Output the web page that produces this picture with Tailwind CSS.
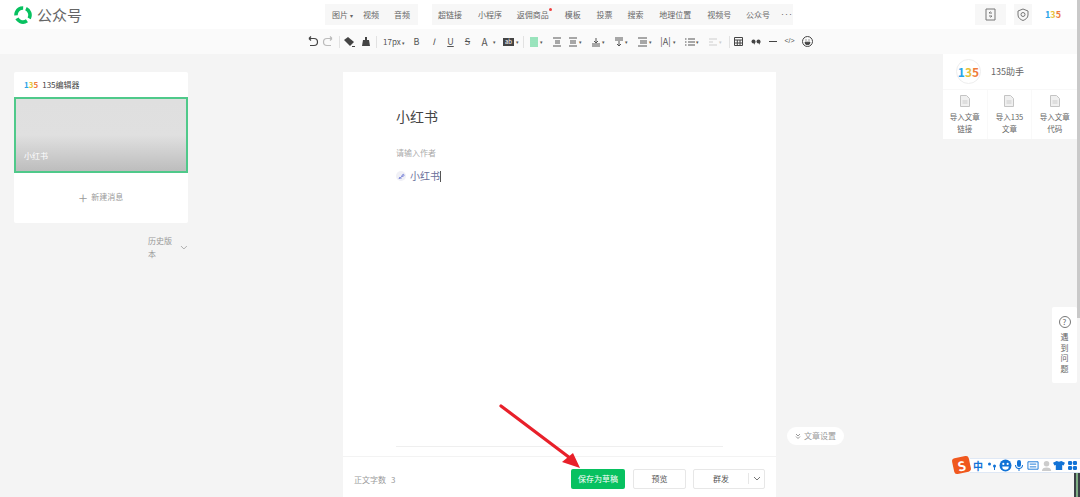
<!DOCTYPE html>
<html lang="zh-CN">
<head>
    <meta charset="UTF-8">
    <title>公众号 - 编辑</title>
    <script src="https://cdn.jsdelivr.net/npm/@tailwindcss/browser@4"></script>
</head>
<body class="relative flex flex-col h-[497px] w-[1080px] overflow-hidden bg-[#f4f4f4] text-[#666] font-['Noto_Sans_CJK_SC','Noto_Sans',sans-serif]">

    <!-- top nav -->
    <header class="flex items-center h-[29px] bg-white text-[8px] shrink-0">
        <div class="flex items-center w-[325px] pl-[13px]">
            <svg class="w-5 h-5" viewBox="0 0 20 20" fill="none" stroke="#07c160" stroke-width="3.600">
                <circle cx="10" cy="10" r="7" stroke-dasharray="11.500 3.160" transform="rotate(-65 10 10)"/>
            </svg>
            <span class="ml-[4px] text-[15px] leading-none text-[#666]">公众号</span>
        </div>
        <div class="flex items-center h-[21px] w-[93px] pl-[7px] bg-[#f7f7f7]">
            <span class="w-[31px]">图片 <span class="text-[6px]">▾</span></span>
            <span class="w-[31px]">视频</span>
            <span>音频</span>
        </div>
        <div class="flex items-center h-[21px] w-[361px] ml-[14px] pl-[6px] bg-[#f7f7f7]">
            <span class="w-[40px]">超链接</span>
            <span class="w-[39px]">小程序</span>
            <span class="relative w-[48px]">返佣商品<span class="absolute left-[32px] -top-[1px] w-[3px] h-[3px] rounded-full bg-[#f04040]"></span></span>
            <span class="w-[32px]">模板</span>
            <span class="w-[31px]">投票</span>
            <span class="w-[32px]">搜索</span>
            <span class="w-[48px]">地理位置</span>
            <span class="w-[39px]">视频号</span>
            <span class="w-[35px]">公众号</span>
            <span class="font-['Liberation_Sans',sans-serif] text-[9px] tracking-[1px]">···</span>
        </div>
        <div class="flex items-center ml-[182px] h-[21px] w-[31px] justify-center bg-[#f7f7f7]">
            <svg class="w-[11px] h-[13px]" viewBox="0 0 11 13" fill="none" stroke="#777" stroke-width="1"><path d="M1 1h9v11H1z"/><path d="M7 5H4l1.500-1.500M4 8h3L5.500 9.500"/></svg>
        </div>
        <div class="flex items-center ml-[8px] h-[21px] w-[18px] justify-center bg-[#f7f7f7]">
            <svg class="w-[12px] h-[13px]" viewBox="0 0 12 13" fill="none" stroke="#777" stroke-width="1"><path d="M6 1l5 2v4c0 3-2.500 4.500-5 5.500C3.500 11.500 1 10 1 7V3z"/><circle cx="6" cy="6.500" r="2"/></svg>
        </div>
        <div class="ml-[13px] text-[9px] font-bold leading-none"><span class="text-[#2aa4e8]">1</span><span class="text-[#e8c23a]">3</span><span class="text-[#ef7b3a]">5</span></div>
    </header>

    <!-- format toolbar -->
    <div class="flex items-center h-[25px] pl-[304px] bg-[#fafafa] text-[#555] text-[8px] shrink-0 whitespace-nowrap">
        <svg class="w-4 h-4" viewBox="0 0 16 16" fill="none" stroke="#444" stroke-width="1.200"><path d="M5 4.500h5a3.500 3.500 0 0 1 0 7H6M5 4.500l2-2M5 4.500l2 2"/></svg>
        <svg class="w-4 h-4 ml-[1px]" viewBox="0 0 16 16" fill="none" stroke="#bbb" stroke-width="1.200"><path d="M11 4.500H6a3.500 3.500 0 0 0 0 7h4M11 4.500l-2-2M11 4.500l-2 2"/></svg>
        <span class="w-px h-[12px] ml-[2px] bg-[#e2e2e2]"></span>
        <svg class="w-4 h-4 ml-[1px]" viewBox="0 0 16 16" fill="#444"><path d="M3 6l4-3 6 5-4 4z"/><path d="M11 12h3v1h-3z"/></svg>
        <svg class="w-4 h-4 ml-[1px]" viewBox="0 0 16 16" fill="#444"><path d="M7 3h2v3h2l1 6H4l1-6h2z"/></svg>
        <span class="w-px h-[12px] ml-[2px] bg-[#e2e2e2]"></span>
        <span class="ml-[6px] w-[21px] leading-none">17px <span class="text-[5px]">▾</span></span>
        <span class="ml-[4px] w-[17px] text-center text-[9px]">B</span>
        <span class="w-[17px] text-center text-[9px] italic">I</span>
        <span class="w-[17px] text-center text-[9px] underline">U</span>
        <span class="w-[17px] text-center text-[9px] line-through">S</span>
        <span class="w-[17px] text-center text-[10px]">A</span>
        <span class="text-[5px] w-[6px]">▾</span>
        <span class="ml-[4px] w-[11px] h-[8px] bg-[#444] text-white text-[6px] leading-[8px] text-center">ab</span>
        <span class="ml-[2px] text-[5px] w-[5px]">▾</span>
        <span class="w-px h-[12px] ml-[2px] bg-[#e2e2e2]"></span>
        <svg class="ml-[5px] w-[10px] h-[10px]" viewBox="0 0 10 10" stroke="#07c160" stroke-width=".8"><path d="M1 1h8M1 3h8M1 5h8M1 7h8M1 9h8"/></svg>
        <span class="ml-[1px] text-[5px] w-[6px]">▾</span>
        <svg class="ml-[5.500px] w-[10px] h-[10px]" viewBox="0 0 10 10" stroke="#555"><path d="M1 1h8M3 4h5M3 6h5M1 9h8"/></svg>
        <svg class="ml-[6px] w-[10px] h-[10px]" viewBox="0 0 10 10" stroke="#555"><path d="M1 1h8M2 4h6M2 6h6M1 9h8"/></svg>
        <span class="ml-[1px] text-[5px] w-[8px]">▾</span>
        <svg class="ml-[4px] w-[10px] h-[10px]" viewBox="0 0 10 10" stroke="#555" fill="none"><path d="M5 1v5M3 4l2 2 2-2M1 7h8M1 9h8"/></svg>
        <span class="ml-[1px] text-[5px] w-[8px]">▾</span>
        <svg class="ml-[4px] w-[10px] h-[10px]" viewBox="0 0 10 10" stroke="#555" fill="none"><path d="M1 1h8M1 3h8M5 4v5M3 7l2 2 2-2"/></svg>
        <span class="ml-[1px] text-[5px] w-[8px]">▾</span>
        <svg class="ml-[4px] w-[11px] h-[10px]" viewBox="0 0 11 10" stroke="#555" fill="none"><path d="M1 1h9M1 9h9M3 4h7M3 6h7"/></svg>
        <span class="ml-[1px] text-[5px] w-[8px]">▾</span>
        <span class="ml-[3.500px] w-[11px] text-[9px] leading-none text-center">|A|</span>
        <span class="ml-[2px] text-[5px] w-[8px]">▾</span>
        <svg class="ml-[3.500px] w-[10px] h-[10px]" viewBox="0 0 10 10" stroke="#555"><path d="M3 2h7M3 5h7M3 8h7M0 2h1.500M0 5h1.500M0 8h1.500"/></svg>
        <span class="ml-[1px] text-[5px] w-[8px]">▾</span>
        <svg class="ml-[4px] w-[10px] h-[10px]" viewBox="0 0 10 10" stroke="#ddd"><path d="M1 2h8M1 5h4M1 8h8" stroke-width="1.500"/></svg>
        <span class="ml-[1px] text-[5px] w-[5px] text-[#ccc]">▾</span>
        <span class="w-px h-[12px] ml-[5px] bg-[#e2e2e2]"></span>
        <svg class="ml-[4px] w-[9px] h-[9px]" viewBox="0 0 9 9" fill="none" stroke="#444"><path d="M.5.5h8v8h-8zM.5 3h8M.5 6h8M3.300 3v5.500M6 3v5.500"/></svg>
        <svg class="ml-[8px] w-[10px] h-[6px]" viewBox="0 0 10 6" fill="#444"><circle cx="2.500" cy="2.500" r="2"/><circle cx="7.500" cy="2.500" r="2"/><path d="M3 3h1.500L3 6zM8 3h1.500L8 6z"/></svg>
        <span class="ml-[8px] w-[8px] h-px bg-[#444]"></span>
        <span class="ml-[8px] w-[10px] text-[7px] text-center font-['Liberation_Sans',sans-serif]">&lt;/&gt;</span>
        <svg class="ml-[7px] w-[11px] h-[11px]" viewBox="0 0 11 11" fill="none" stroke="#444"><circle cx="5.500" cy="5.500" r="5"/><path d="M3 6.200h5a2.500 2.500 0 0 1-5 0z" fill="#444"/><path d="M3.500 4h1M6.500 4h1"/></svg>
    </div>

    <!-- main -->
    <main class="flex flex-1 min-h-0">
        <aside class="w-[343px] pl-[14px] pt-[18px] shrink-0">
            <div class="w-[174px] h-[151px] bg-white rounded-[2px]">
                <div class="flex items-center h-[25px] pl-[10px] text-[8px] text-[#444]">
                    <span class="text-[8px] font-bold leading-none"><span class="text-[#2aa4e8]">1</span><span class="text-[#e8c23a]">3</span><span class="text-[#ef7b3a]">5</span></span>
                    <span class="ml-[4px]">135编辑器</span>
                </div>
                <div class="flex items-end h-[76px] pl-[8px] pb-[9px] border-2 border-[#4fc98a] bg-gradient-to-b from-[#dfdfdf] via-[#e0e0e0] to-[#bdbdbd] text-[8px] text-white">小红书</div>
                <div class="flex items-center justify-center h-[48px] text-[8px] text-[#999]">
                    <span class="text-[16px] font-light leading-none mr-[4px]">+</span>新建消息
                </div>
            </div>
            <div class="flex items-center w-[174px] mt-[11px] pl-[134px] text-[8px] text-[#999]">
                <span class="w-[30px] leading-[13px]">历史版本</span>
                <svg class="ml-[3px] w-[8px] h-[5px]" viewBox="0 0 8 5" fill="none" stroke="#aaa"><path d="M1 1l3 3 3-3"/></svg>
            </div>
        </aside>

        <section class="flex flex-col w-[433px] bg-white shrink-0 mt-[18px]">
            <div class="flex-1 px-[53px] pt-[32px]">
                <h1 class="text-[14px] leading-[24px] text-[#444]">小红书</h1>
                <p class="mt-[19px] text-[8px] leading-[12px] text-[#aaa]">请输入作者</p>
                <div class="flex items-center mt-[9px] text-[10px] leading-[16px] text-[#6a6f9a]">
                    <span class="flex items-center justify-center w-[10px] h-[10px] rounded-full bg-[#f0f0f6]">
                        <svg class="w-[7px] h-[7px]" viewBox="0 0 7 7" fill="none" stroke="#7580d8"><path d="M1 6c0-2 3-1 3-3s2-2 2-1-1 2-2 1M1 5c1-1 2 0 2 1"/></svg>
                    </span>
                    <span class="ml-[4px]">小红书</span>
                    <span class="w-px h-[11px] bg-[#555]"></span>
                </div>
            </div>
            <div class="mx-[53px] h-px bg-[#efefef]"></div>
            <footer class="flex items-center h-[40px] mt-[9px] mb-[1px] pl-[11px] border-t border-[#f3f3f3] text-[8px]">
                <span class="w-[217px] pt-[7px] text-[#999]">正文字数<span class="ml-[5px]">3</span></span>
                <button class="w-[54px] h-[20px] mt-[4px] rounded-[2px] bg-[#07c160] text-white">保存为草稿</button>
                <button class="w-[53px] h-[20px] mt-[4px] ml-[8px] rounded-[2px] bg-white border border-[#e7e7e7] text-[#555]">预览</button>
                <div class="flex items-center w-[72px] h-[20px] mt-[4px] ml-[7px] rounded-[2px] border border-[#e7e7e7] text-[#555]">
                    <span class="w-[54px] text-center">群发</span>
                    <span class="w-px h-[11px] bg-[#e7e7e7]"></span>
                    <svg class="ml-[4px] w-[8px] h-[5px]" viewBox="0 0 8 5" fill="none" stroke="#777"><path d="M1 1l3 3 3-3"/></svg>
                </div>
            </footer>
        </section>
    </main>

    <!-- 135 helper panel -->
    <div class="absolute left-[943px] top-[54px] w-[134px] h-[85px] bg-white text-[#666]">
        <div class="flex items-center h-[36px] pl-[13px] border-b border-[#f8f8f8]">
            <span class="flex items-center justify-center w-[25px] h-[25px] rounded-full border border-[#eee] text-[12px] font-bold leading-none"><span class="text-[#2aa4e8]">1</span><span class="text-[#e8c23a]">3</span><span class="text-[#ef7b3a]">5</span></span>
            <span class="ml-[10px] pt-[1px] text-[9px]">135助手</span>
        </div>
        <div class="grid grid-cols-3 h-[49px] text-[7.500px] leading-[12px] text-center">
            <div class="flex flex-col items-center pt-[5px] border-r border-[#f9f9f9]">
                <svg class="w-[10px] h-[12px] mb-[4px]" viewBox="0 0 10 12" fill="#f0f0f0" stroke="#c4c4c4"><path d="M.5.5h6l3 3v8h-9z"/><path d="M2.500 6h5M2.500 8h5" stroke="#ccc"/></svg>
                <span>导入文章<br>链接</span>
            </div>
            <div class="flex flex-col items-center pt-[5px] border-r border-[#f9f9f9]">
                <svg class="w-[10px] h-[12px] mb-[4px]" viewBox="0 0 10 12" fill="#f0f0f0" stroke="#c4c4c4"><path d="M.5.5h6l3 3v8h-9z"/><path d="M2.500 6h5M2.500 8h5" stroke="#ccc"/></svg>
                <span>导入135<br>文章</span>
            </div>
            <div class="flex flex-col items-center pt-[5px]">
                <svg class="w-[10px] h-[12px] mb-[4px]" viewBox="0 0 10 12" fill="#f0f0f0" stroke="#c4c4c4"><path d="M.5.5h6l3 3v8h-9z"/><path d="M2.500 6h5M2.500 8h5" stroke="#ccc"/></svg>
                <span>导入文章<br>代码</span>
            </div>
        </div>
    </div>

    <!-- help tab -->
    <div class="absolute left-[1052px] top-[307px] flex flex-col items-center w-[25px] h-[76px] pt-[9px] bg-white rounded-[2px] text-[8px] leading-[10.500px]">
        <span class="flex items-center justify-center w-[12px] h-[12px] mb-[4px] rounded-full border border-[#777] text-[8px] leading-none">?</span>
        <span>遇</span><span>到</span><span>问</span><span>题</span>
    </div>

    <!-- article settings pill -->
    <div class="absolute left-[787px] top-[427px] flex items-center w-[57px] h-[18px] pl-[8px] rounded-full bg-white text-[8px] text-[#999]">
        <svg class="w-[6px] h-[6px]" viewBox="0 0 6 6" fill="none" stroke="#999"><path d="M1 1l2 2 2-2M1 3.500l2 2 2-2"/></svg>
        <span class="ml-[3px]">文章设置</span>
    </div>

    <!-- red arrow -->
    <svg class="absolute left-[490px] top-[400px] w-[100px] h-[75px]" viewBox="0 0 100 75">
        <path d="M11 6L80 58" stroke="#e8202a" stroke-width="3.200" stroke-linecap="round"/>
        <path d="M90 68L72 62L83 53z" fill="#e8202a"/>
    </svg>

    <!-- IME bar -->
    <div class="absolute left-[970px] top-[458px] flex items-center w-[110px] h-[15px] bg-white border-y border-[#dfe8f5] text-[#1273d6]">
        <span class="ml-[2px] w-[12px] text-[10px] font-bold leading-none text-center">中</span>
        <svg class="ml-[2px] w-[12px] h-[12px]" viewBox="0 0 12 12" fill="#1273d6"><circle cx="3.500" cy="4" r="1.500"/><circle cx="8.500" cy="6" r="1.500"/><path d="M8 7h1v3H8z"/></svg>
        <svg class="ml-[1px] w-[13px] h-[13px]" viewBox="0 0 12 12"><circle cx="6" cy="6" r="5.500" fill="#1273d6"/><circle cx="4" cy="4.500" r="1" fill="#fff"/><circle cx="8" cy="4.500" r="1" fill="#fff"/><path d="M3 7h6a3 3 0 0 1-6 0z" fill="#fff"/></svg>
        <svg class="ml-[1px] w-[12px] h-[13px]" viewBox="0 0 12 13" fill="#1273d6"><rect x="4" y="1" width="4" height="7" rx="2"/><path d="M2 6h1a3 3 0 0 0 6 0h1a4 4 0 0 1-3.500 4v2h-1v-2A4 4 0 0 1 2 6z"/></svg>
        <svg class="ml-[2px] w-[12px] h-[11px]" viewBox="0 0 13 11" fill="none" stroke="#1273d6"><path d="M1 1.500h11v8H1z"/><path d="M3 4h7M3 7h7"/></svg>
        <svg class="ml-[2px] w-[12px] h-[12px]" viewBox="0 0 13 13" fill="#ccc"><circle cx="6" cy="4" r="3"/><path d="M1 12c0-3 2-4 5-4s5 1 5 4z"/></svg>
        <svg class="w-[12px] h-[11px]" viewBox="0 0 13 12" fill="#1273d6"><path d="M4 1l2.500 1L9 1l4 2-1.500 3L10 5.500V11H3V5.500L1.500 6 0 3z"/></svg>
        <svg class="ml-[3px] w-[9px] h-[9px]" viewBox="0 0 11 11" fill="#1273d6"><rect x="0" y="0" width="5" height="5" rx="1.500"/><rect x="6" y="0" width="5" height="5" rx="1.500"/><rect x="0" y="6" width="5" height="5" rx="1.500"/><rect x="6" y="6" width="5" height="5" rx="1.500"/></svg>
    </div>
    <div class="absolute left-[953px] top-[457px] flex items-center justify-center w-[17px] h-[16px] rounded-[3px] -rotate-12 bg-[#f0581e] text-white text-[13px] font-bold leading-none">S</div>

    <!-- scrollbar and taskbar corner -->
    <div class="absolute right-0 top-0 w-[3px] h-[318px] bg-[#c9c9c9]"></div>
    <div class="absolute right-0 top-[473px] flex justify-center w-[6px] h-[24px] bg-[#3c4148]">
        <span class="w-[2px] h-full bg-[#7fae85]"></span>
    </div>
</body>
</html>
